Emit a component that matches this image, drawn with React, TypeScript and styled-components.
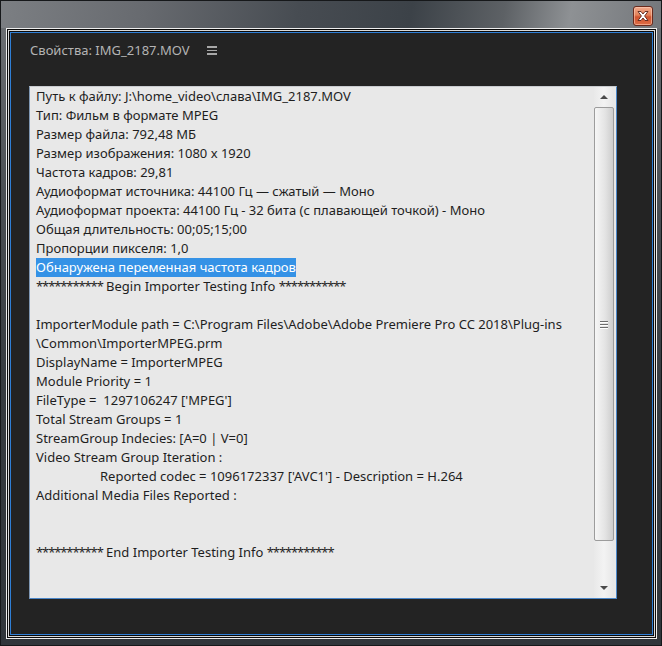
import * as React from 'react';
import styled, { createGlobalStyle } from 'styled-components';

const GlobalStyle = createGlobalStyle`
  html, body {
    margin: 0;
    padding: 0;
    background: #2b2f33;
  }
`;

const textFont = `"Noto Sans", "Open Sans", sans-serif`;

const Window = styled.div`
  box-sizing: border-box;
  display: flex;
  flex-direction: column;
  width: 662px;
  height: 646px;
  border: 1px solid #16181a;
  background: linear-gradient(180deg, #707377 0%, #4a4f54 30%, #363b40 60%, #30353a 100%);
`;

const TitleBar = styled.div`
  display: flex;
  align-items: flex-start;
  justify-content: flex-end;
  height: 27px;
  padding: 5px 8px 0 0;
  box-sizing: border-box;
  background: linear-gradient(100deg, #7c7f83 0%, #676a6f 22%, #474c52 45%, #3c4248 62%, #5d6165 76%, #8e9194 86%, #74777b 100%);
`;

const CloseButton = styled.div`
  width: 20px;
  height: 20px;
  box-sizing: border-box;
  border: 1px solid #6b2a1c;
  border-radius: 3px;
  background: linear-gradient(180deg, #f2ab8e 0%, #e48158 45%, #d0532f 55%, #de6d45 100%);
  box-shadow: inset 0 0 0 1px rgba(255, 210, 190, 0.55);
  display: flex;
  align-items: center;
  justify-content: center;
`;

const Body = styled.div`
  flex: 1;
  display: flex;
  padding: 0 4px 6px 5px;
`;

const Frame = styled.div`
  flex: 1;
  display: flex;
  border: 1px solid #eeeeee;
  padding: 3px;
  box-shadow: inset 0 0 0 1px #0b0b0b, inset 0 0 0 2px #d9d9d9, inset 0 0 0 3px #0b0b0b;
`;

const Panel = styled.div`
  flex: 1;
  display: flex;
  flex-direction: column;
  border: 1px solid #2f7fd6;
  background: #232323;
  padding: 0 35px 35px 18px;
`;

const PanelHeader = styled.div`
  display: flex;
  align-items: center;
  height: 33px;
  margin-bottom: 20px;
  padding-left: 1px;
  gap: 17px;
`;

const PanelTitle = styled.span`
  color: #b4b4b4;
  font-family: ${textFont};
  font-size: 13px;
`;

const MenuIcon = styled.span`
  display: flex;
  flex-direction: column;
  gap: 2px;
  margin-top: 2px;

  > i {
    display: block;
    width: 10px;
    height: 1.5px;
    background: #a8a8a8;
  }
`;

const TextBox = styled.div`
  flex: 1;
  display: flex;
  border: 1px solid #4a86c8;
  border-top-color: #c9ccd0;
  border-left-color: #7f97b3;
  background: #e8e8e8;
  padding-right: 2px;
`;

const Content = styled.div`
  flex: 1;
  padding: 0 0 0 6px;
  font-family: ${textFont};
  font-size: 13px;
  line-height: 19px;
  color: #1e1e1e;
  white-space: pre;
  overflow: hidden;
`;

const Line = styled.div<{ $indent?: boolean }>`
  height: 19px;
  padding-left: ${(p) => (p.$indent ? '64px' : '0')};
`;

const Highlight = styled.span`
  display: inline-block;
  background: #3592e6;
  color: #ffffff;
`;

const Stars = styled.span`
  letter-spacing: -1.1px;
`;

const Scrollbar = styled.div`
  width: 20px;
  display: flex;
  flex-direction: column;
  background: linear-gradient(90deg, #e9e9e9 0%, #f3f3f3 50%, #e6e6e6 100%);
`;

const Arrow = styled.div<{ $down?: boolean }>`
  height: 20px;
  display: flex;
  align-items: center;
  justify-content: center;

  &::after {
    content: '';
    width: 0;
    height: 0;
    border-left: 4px solid transparent;
    border-right: 4px solid transparent;
    ${(p) =>
      p.$down
        ? 'border-top: 4px solid #4a4a4a;'
        : 'border-bottom: 4px solid #4a4a4a;'}
  }
`;

const Thumb = styled.div`
  height: 434px;
  box-sizing: border-box;
  border: 1px solid #9c9c9c;
  border-radius: 2px;
  background: linear-gradient(90deg, #f6f6f6 0%, #e4e4e4 55%, #cdcdcd 100%);
  display: flex;
  flex-direction: column;
  align-items: center;
  justify-content: center;
  gap: 2px;

  > i {
    display: block;
    width: 8px;
    height: 1px;
    background: #6e6e6e;
    box-shadow: 0 1px 0 #ffffff;
  }
`;

const Track = styled.div`
  flex: 1;
`;

type Row = { text: string; indent?: boolean; highlight?: boolean; banner?: boolean };

const stars = '***********';

const rows: Row[] = [
  { text: 'Путь к файлу: J:\\home_video\\слава\\IMG_2187.MOV' },
  { text: 'Тип: Фильм в формате MPEG' },
  { text: 'Размер файла: 792,48 МБ' },
  { text: 'Размер изображения: 1080 x 1920' },
  { text: 'Частота кадров: 29,81' },
  { text: 'Аудиоформат источника: 44100 Гц — сжатый — Моно' },
  { text: 'Аудиоформат проекта: 44100 Гц - 32 бита (с плавающей точкой) - Моно' },
  { text: 'Общая длительность: 00;05;15;00' },
  { text: 'Пропорции пикселя: 1,0' },
  { text: 'Обнаружена переменная частота кадров', highlight: true },
  { text: ' Begin Importer Testing Info ', banner: true },
  { text: '' },
  { text: 'ImporterModule path = C:\\Program Files\\Adobe\\Adobe Premiere Pro CC 2018\\Plug-ins' },
  { text: '\\Common\\ImporterMPEG.prm' },
  { text: 'DisplayName = ImporterMPEG' },
  { text: 'Module Priority = 1' },
  { text: "FileType =  1297106247 ['MPEG']" },
  { text: 'Total Stream Groups = 1' },
  { text: 'StreamGroup Indecies: [A=0 | V=0]' },
  { text: 'Video Stream Group Iteration :' },
  { text: "Reported codec = 1096172337 ['AVC1'] - Description = H.264", indent: true },
  { text: 'Additional Media Files Reported :' },
  { text: '' },
  { text: '' },
  { text: ' End Importer Testing Info ', banner: true },
];

const CloseGlyph = () => (
  <svg width="14" height="12" viewBox="0 0 14 12">
    <path
      d="M2 1.5 L5 1.5 L7 4 L9 1.5 L12 1.5 L8.6 6 L12 10.5 L9 10.5 L7 8 L5 10.5 L2 10.5 L5.4 6 Z"
      fill="#ffffff"
      stroke="#5a2418"
      strokeWidth="0.9"
      strokeLinejoin="round"
    />
  </svg>
);

const renderRow = (row: Row) => {
  if (row.highlight) return <Highlight>{row.text}</Highlight>;
  if (row.banner)
    return (
      <>
        <Stars>{stars}</Stars>
        {row.text}
        <Stars>{stars}</Stars>
      </>
    );
  return row.text;
};

const App = () => {
  return (
    <>
      <GlobalStyle />
      <Window>
        <TitleBar>
          <CloseButton>
            <CloseGlyph />
          </CloseButton>
        </TitleBar>
        <Body>
          <Frame>
            <Panel>
              <PanelHeader>
                <PanelTitle>Свойства: IMG_2187.MOV</PanelTitle>
                <MenuIcon>
                  <i />
                  <i />
                  <i />
                </MenuIcon>
              </PanelHeader>
              <TextBox>
                <Content>
                  {rows.map((row, i) => (
                    <Line key={i} $indent={row.indent}>
                      {renderRow(row)}
                    </Line>
                  ))}
                </Content>
                <Scrollbar>
                  <Arrow />
                  <Thumb>
                    <i />
                    <i />
                    <i />
                  </Thumb>
                  <Track />
                  <Arrow $down />
                </Scrollbar>
              </TextBox>
            </Panel>
          </Frame>
        </Body>
      </Window>
    </>
  );
};

export default App;
